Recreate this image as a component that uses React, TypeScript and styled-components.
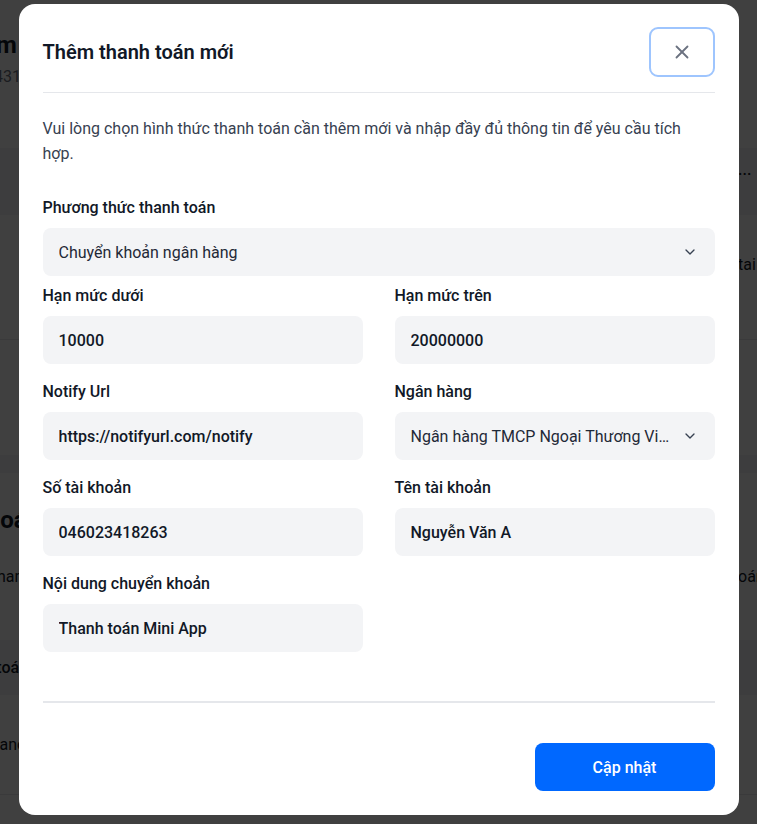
import React from 'react';
import styled, { createGlobalStyle } from 'styled-components';
import { ChevronDown, X } from 'lucide-react';

const GlobalStyle = createGlobalStyle`
  * { box-sizing: border-box; }
  html, body { margin: 0; padding: 0; }
  body {
    font-family: Roboto, "Noto Sans", Arial, sans-serif;
    background: #f3f4f6;
    width: 757px;
    height: 824px;
    overflow: hidden;
  }
`;

/* ---------- background page (dimmed behind the dialog) ---------- */

const Page = styled.div`
  width: 1000px;
  margin-left: -150px;
  display: flex;
  flex-direction: column;
  gap: 18px;
  color: #111827;
`;

const Card = styled.section`
  background: #fff;
  display: flex;
  flex-direction: column;
`;

const Row = styled.div<{ $h: number; $pl: number; $pt: number; $band?: boolean; $line?: boolean }>`
  height: ${(p) => p.$h}px;
  padding: ${(p) => p.$pt}px 0 0 ${(p) => p.$pl}px;
  background: ${(p) => (p.$band ? '#f3f4f6' : 'transparent')};
  border-bottom: ${(p) => (p.$line ? '1px solid #e5e7eb' : 'none')};
  display: grid;
  grid-template-columns: 1fr 112px;
  align-items: start;
  font-size: 16px;
  line-height: 24px;
  white-space: nowrap;
  overflow: hidden;
`;

const PageTitle = styled.h1`
  margin: 0;
  font-size: 24px;
  font-weight: 700;
  line-height: 34px;
`;

const Muted = styled.span`
  color: #6b7280;
`;

const Strong = styled.span`
  font-weight: 500;
`;

const Spacer = styled.div<{ $h: number }>`
  height: ${(p) => p.$h}px;
`;

/* ---------- dialog ---------- */

const Overlay = styled.div`
  position: fixed;
  inset: 0;
  background: rgba(0, 0, 0, 0.75);
  display: flex;
  justify-content: center;
  align-items: flex-start;
  padding-top: 4px;
`;

const Modal = styled.div`
  width: 720px;
  background: #ffffff;
  border-radius: 16px;
  padding: 23px 24px 24px;
  display: flex;
  flex-direction: column;
`;

const Header = styled.header`
  display: flex;
  align-items: center;
  justify-content: space-between;
  padding-bottom: 15px;
  border-bottom: 1px solid #e5e7eb;
`;

const Title = styled.h2`
  margin: 0;
  font-size: 20px;
  font-weight: 600;
  color: #111827;
`;

const CloseButton = styled.button`
  width: 66px;
  height: 50px;
  border: 2px solid #9ec5fe;
  border-radius: 9px;
  background: #fff;
  display: flex;
  align-items: center;
  justify-content: center;
  color: #6b7280;
  padding: 0;
  cursor: pointer;
`;

const Description = styled.p`
  margin: 23px 0 30px;
  font-size: 16px;
  line-height: 25px;
  color: #374151;
`;

const Field = styled.div<{ $mb?: number }>`
  display: flex;
  flex-direction: column;
  gap: 8px;
  min-width: 0;
  margin-bottom: ${(p) => p.$mb ?? 0}px;
`;

const Label = styled.label`
  font-size: 16px;
  line-height: 24px;
  font-weight: 500;
  color: #111827;
`;

const Grid = styled.div`
  display: grid;
  grid-template-columns: minmax(0, 1fr) minmax(0, 1fr);
  column-gap: 32px;
  row-gap: 16px;
`;

const Input = styled.input`
  height: 48px;
  width: 100%;
  border: none;
  outline: none;
  border-radius: 8px;
  background: #f3f4f6;
  padding: 0 16px;
  font-family: inherit;
  font-size: 16px;
  font-weight: 500;
  color: #111827;
`;

const SelectBox = styled.div`
  height: 48px;
  border-radius: 8px;
  background: #f3f4f6;
  padding: 0 17px 0 16px;
  display: flex;
  align-items: center;
  gap: 10px;
  font-size: 16px;
  color: #1f2937;
  cursor: pointer;
`;

const SelectValue = styled.span`
  flex: 1;
  min-width: 0;
  overflow: hidden;
  text-overflow: ellipsis;
  white-space: nowrap;
`;

const Footer = styled.footer`
  margin-top: 49px;
  padding-top: 40px;
  border-top: 2px solid #e5e7eb;
  display: flex;
  justify-content: flex-end;
`;

const PrimaryButton = styled.button`
  width: 180px;
  height: 48px;
  border: none;
  border-radius: 8px;
  background: #0068ff;
  color: #fff;
  font-family: inherit;
  font-size: 16px;
  font-weight: 500;
  cursor: pointer;
`;

const Select: React.FC<{ value: string }> = ({ value }) => (
  <SelectBox>
    <SelectValue>{value}</SelectValue>
    <ChevronDown size={16} strokeWidth={2} color="#374151" />
  </SelectBox>
);

export default function App() {
  return (
    <>
      <GlobalStyle />
      <Page>
        <Card>
          <Row $h={62} $pl={96} $pt={28}>
            <PageTitle>Dream</PageTitle>
            <span />
          </Row>
          <Row $h={86} $pl={89} $pt={3}>
            <Muted>App ID: 4312</Muted>
            <span />
          </Row>
          <Row $h={67} $pl={260} $pt={10} $band>
            <span />
            <Strong>...</Strong>
          </Row>
          <Row $h={125} $pl={260} $pt={38} $line>
            <span />
            <span>tai khoản</span>
          </Row>
          <Spacer $h={115} />
        </Card>
        <Card>
          <Row $h={62} $pl={96} $pt={30}>
            <PageTitle>Đối soát</PageTitle>
            <span />
          </Row>
          <Row $h={105} $pl={90} $pt={30}>
            <span>Số liệu thanh</span>
            <span>oán</span>
          </Row>
          <Row $h={55} $pl={61} $pt={16} $band>
            <Strong>Ngày thanh toán</Strong>
            <span />
          </Row>
          <Row $h={100} $pl={128} $pt={38} $line>
            <span>Finance</span>
            <span />
          </Row>
          <Spacer $h={40} />
        </Card>
      </Page>

      <Overlay>
        <Modal role="dialog" aria-modal="true">
          <Header>
            <Title>Thêm thanh toán mới</Title>
            <CloseButton aria-label="Đóng">
              <X size={22} strokeWidth={2} />
            </CloseButton>
          </Header>

          <Description>
            Vui lòng chọn hình thức thanh toán cần thêm mới và nhập đầy đủ thông tin để yêu cầu tích hợp.
          </Description>

          <Field $mb={8}>
            <Label>Phương thức thanh toán</Label>
            <Select value="Chuyển khoản ngân hàng" />
          </Field>

          <Grid>
            <Field>
              <Label>Hạn mức dưới</Label>
              <Input readOnly value="10000" />
            </Field>
            <Field>
              <Label>Hạn mức trên</Label>
              <Input readOnly value="20000000" />
            </Field>
            <Field>
              <Label>Notify Url</Label>
              <Input readOnly value="https://notifyurl.com/notify" />
            </Field>
            <Field>
              <Label>Ngân hàng</Label>
              <Select value="Ngân hàng TMCP Ngoại Thương Việt Nam" />
            </Field>
            <Field>
              <Label>Số tài khoản</Label>
              <Input readOnly value="046023418263" />
            </Field>
            <Field>
              <Label>Tên tài khoản</Label>
              <Input readOnly value="Nguyễn Văn A" />
            </Field>
            <Field>
              <Label>Nội dung chuyển khoản</Label>
              <Input readOnly value="Thanh toán Mini App" />
            </Field>
          </Grid>

          <Footer>
            <PrimaryButton>Cập nhật</PrimaryButton>
          </Footer>
        </Modal>
      </Overlay>
    </>
  );
}
